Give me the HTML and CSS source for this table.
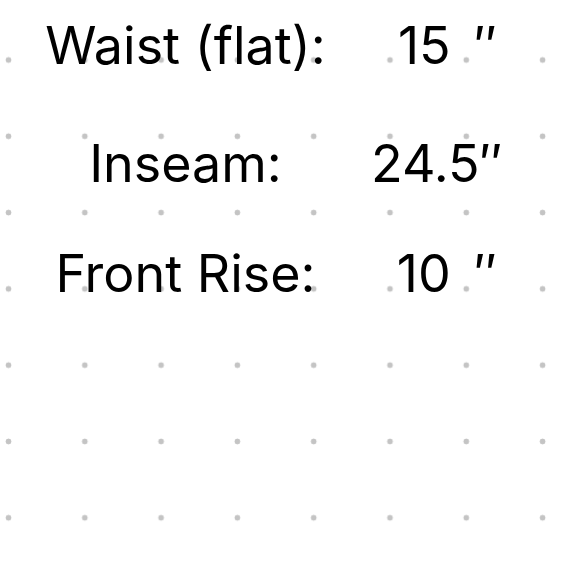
FILE: index.html
```html
<!DOCTYPE html>
<html>
<head>
<meta charset="utf-8">
<link rel="stylesheet" href="styles.css">
</head>
<body>
<div class="sheet">
  <div class="row">
    <span class="label">Waist (flat):</span>
    <span class="value">15 &#8198;″</span>
  </div>
  <div class="row row-second">
    <span class="label">Inseam:</span>
    <span class="value">24.5″</span>
  </div>
  <div class="row row-third">
    <span class="label">Front Rise:</span>
    <span class="value">10 &#8198;″</span>
  </div>
</div>
</body>
</html>
```

FILE: styles.css
```css
html, body {
  margin: 0;
  padding: 0;
  width: 580px;
  height: 580px;
  overflow: hidden;
}
body {
  background-color: #ffffff;
  background-image: radial-gradient(circle, #c4c4c4 2.6px, rgba(196,196,196,0) 3.2px);
  background-size: 76.3px 76.3px;
  background-position: -29.65px 21.85px;
  font-family: "Inter", "Noto Sans", sans-serif;
  color: #000;
}
.sheet {
  display: flex;
  flex-direction: column;
  padding-top: 20px;
}
.row {
  display: grid;
  grid-template-columns: 371px 126px;
  font-size: 52px;
  line-height: 52px;
  height: 52px;
  white-space: pre;
}
.row-second {
  margin-top: 66px;
}
.row-third {
  margin-top: 58px;
}
.label {
  text-align: center;
}
.value {
  text-align: right;
}
```
